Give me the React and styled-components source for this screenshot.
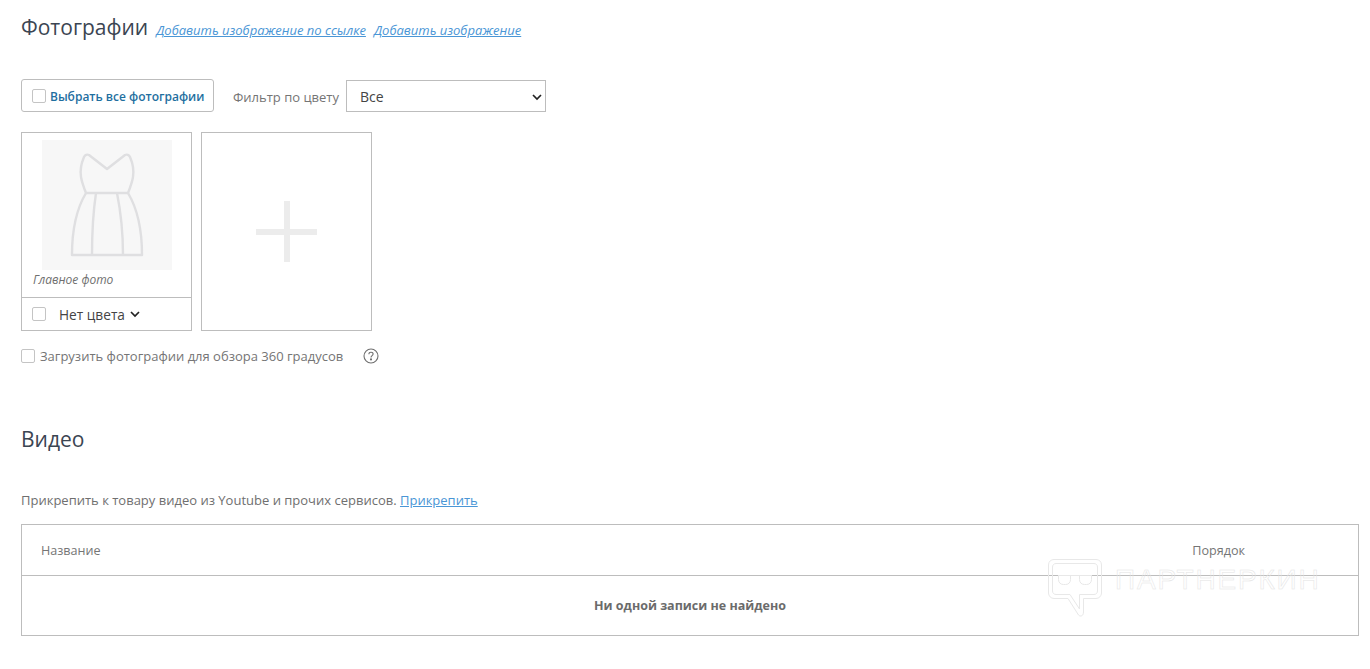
import React from "react";
import styled, { createGlobalStyle } from "styled-components";

const Global = createGlobalStyle`
  html, body { margin: 0; padding: 0; background: #fff; }
  body { font-family: "Open Sans", "Liberation Sans", sans-serif; font-size: 13px; color: #6b6b6b; }
  * { box-sizing: border-box; }
`;
const Page = styled.div`
  position: relative;
  width: 1370px;
  height: 669px;
  overflow: hidden;
  padding: 12px 11px 0 21px;
`;
const TitleRow = styled.div`
  display: flex;
  align-items: baseline;
  gap: 8px;
  height: 30px;
`;
const Heading = styled.h2`
  margin: 0;
  font-size: 21px;
  line-height: 30px;
  font-weight: 400;
  color: #3b4552;
`;
const ItalicLink = styled.a`
  font-size: 13px;
  font-style: italic;
  color: #4a96d6;
  text-decoration: underline;
  line-height: 18px;
`;
const Toolbar = styled.div`
  display: flex;
  align-items: center;
  margin-top: 37px;
  height: 33px;
`;
const SelectAll = styled.label`
  display: flex;
  align-items: center;
  gap: 4px;
  width: 193px;
  height: 33px;
  padding-left: 10px;
  border: 1px solid #bdbdbd;
  border-radius: 3px;
  font-size: 12px;
  font-weight: 600;
  color: #1f6f9f;
`;
const Check = styled.span`
  display: block;
  flex: none;
  width: 14px;
  height: 14px;
  border: 1px solid #c4c4c4;
  border-radius: 2px;
  background: #fff;
`;
const NudgedText = styled.span`
  padding-top: 2px;
`;
const FilterLabel = styled.span`
  margin-left: 19px;
  width: 113px;
  padding-top: 2px;
  font-size: 13px;
  color: #757575;
`;
const Select = styled.div`
  position: relative;
  display: flex;
  align-items: center;
  width: 200px;
  height: 32px;
  padding: 2px 0 0 13px;
  border: 1px solid #bdbdbd;
  font-size: 14px;
  color: #444;
`;
const SelectChevron = styled.svg`
  position: absolute;
  right: 3px;
  top: 11px;
`;
const Tiles = styled.div`
  display: flex;
  gap: 9px;
  margin-top: 20px;
`;
const Tile = styled.div`
  display: flex;
  flex-direction: column;
  width: 171px;
  height: 199px;
  border: 1px solid #bdbdbd;
`;
const AddTile = styled(Tile)`
  align-items: center;
  justify-content: center;
`;
const TileBody = styled.div`
  flex: 1;
  padding: 7px 0 0 20px;
`;
const Preview = styled.div`
  width: 130px;
  height: 130px;
  background: #f7f7f7;
`;
const Caption = styled.div`
  margin: 2px 0 0 -9px;
  font-size: 12px;
  line-height: 16px;
  font-style: italic;
  color: #6f6f6f;
`;
const TileFooter = styled.div`
  display: flex;
  align-items: center;
  height: 33px;
  padding-left: 10px;
  border-top: 1px solid #bdbdbd;
  font-size: 13.7px;
  color: #444;
`;
const ColorName = styled.span`
  margin-left: 13px;
  margin-right: 5px;
`;
const Option360 = styled.div`
  display: flex;
  align-items: center;
  margin-top: 16px;
  height: 18px;
  font-size: 13px;
  color: #757575;
`;
const Option360Text = styled.span`
  margin-left: 5px;
  margin-right: 20px;
`;
const VideoHeading = styled(Heading)`
  margin-top: 59px;
`;
const Help = styled.p`
  margin: 37px 0 0;
  font-size: 13px;
  line-height: 18px;
  color: #6f6f6f;
`;
const Attach = styled.a`
  color: #4a96d6;
  text-decoration: underline;
`;
const Table = styled.div`
  margin-top: 15px;
  width: 1338px;
  height: 112px;
  border: 1px solid #bdbdbd;
`;
const TableHead = styled.div`
  display: flex;
  align-items: center;
  justify-content: space-between;
  height: 51px;
  padding: 0 113px 0 19px;
  border-bottom: 1px solid #bdbdbd;
  font-size: 12.6px;
  color: #757575;
`;
const Empty = styled.div`
  display: flex;
  align-items: center;
  justify-content: center;
  height: 59px;
  font-size: 12.5px;
  font-weight: 700;
  color: #6b6b6b;
`;
const Watermark = styled.div`
  position: absolute;
  left: 1048px;
  top: 559px;
  display: flex;
  align-items: flex-start;
  pointer-events: none;
`;
const WatermarkText = styled.span`
  margin: 3px 0 0 13px;
  font-family: "Liberation Sans", sans-serif;
  font-size: 28px;
  line-height: 36px;
  letter-spacing: 1.8px;
  color: transparent;
  -webkit-text-stroke: 0.5px #e4e4e4;
`;

const Chevron = ({ size = 10 }) => (
  <svg width={size} height={size} viewBox="0 0 10 10" fill="none" stroke="#222" strokeWidth="1.7">
    <path d="M1 3l4 4 4-4" />
  </svg>
);

const Dress = () => (
  <svg width="130" height="130" viewBox="0 0 130 130" fill="none" stroke="#dfdfe1" strokeWidth="2.4" strokeLinejoin="round">
    <path d="M42 17c1-2 3-3 5-2l18 14 18-14c2-1 4 0 5 2 3 7 4 14 3 20-1 6-3 11-5 16H44c-2-5-4-10-5-16-1-6 0-13 3-20z" />
    <path d="M44 53c-9 15-14 35-14 62h70c0-27-5-47-14-62" />
    <path d="M54 53c-3 20-4 41-4 62M75 53c4 20 6 41 6 62" />
  </svg>
);

const HelpIcon = () => (
  <svg width="16" height="16" viewBox="0 0 16 16" fill="none" stroke="#6f6f6f" strokeWidth="1.1">
    <circle cx="8" cy="8" r="7" />
    <path d="M5.9 6.2c0-1.2 1-1.9 2.1-1.9s2.1.7 2.1 1.8c0 1.6-2.1 1.5-2.1 3.3" />
    <circle cx="8" cy="11.4" r=".5" fill="#6f6f6f" />
  </svg>
);

const WatermarkLogo = () => (
  <svg width="54" height="58" viewBox="0 0 54 58" fill="none" stroke="#e8e8e8" strokeWidth="1">
    <path d="M6 .5h42c3 0 5.500 2 5.500 5.500v28c0 3-2.500 5.500-5.500 5.500H35.500V53c0 4-3 5-5 3L20 39.500H6C3 39.500.5 37 .5 34V6C.5 2.500 3 .5 6 .5z" />
    <path d="M8 4.500h38c2 0 3.500 1.500 3.500 3.500v24c0 2-1.500 3.500-3.500 3.500H31.500V50L22 35.500H8c-2 0-3.500-1.500-3.500-3.500V8c0-2 1.500-3.500 3.500-3.500z" />
    <path d="M10 16.500h34M10.500 16.500v4c0 3 2 5 5 5h2c3 0 5-2 5-5v-4M31.500 16.500v4c0 3 2 5 5 5h2c3 0 5-2 5-5v-4" />
  </svg>
);

export default function App() {
  return (
    <Page>
      <Global />
      <TitleRow>
        <Heading>Фотографии</Heading>
        <ItalicLink>Добавить изображение по ссылке</ItalicLink>
        <ItalicLink>Добавить изображение</ItalicLink>
      </TitleRow>
      <Toolbar>
        <SelectAll><Check /><NudgedText>Выбрать все фотографии</NudgedText></SelectAll>
        <FilterLabel>Фильтр по цвету</FilterLabel>
        <Select>
          Все
          <SelectChevron width="10" height="10" viewBox="0 0 10 10" fill="none" stroke="#222" strokeWidth="1.7">
            <path d="M1 3l4 4 4-4" />
          </SelectChevron>
        </Select>
      </Toolbar>
      <Tiles>
        <Tile>
          <TileBody>
            <Preview><Dress /></Preview>
            <Caption>Главное фото</Caption>
          </TileBody>
          <TileFooter>
            <Check />
            <ColorName>Нет цвета</ColorName>
            <Chevron />
          </TileFooter>
        </Tile>
        <AddTile>
          <svg width="61" height="61" viewBox="0 0 61 61" fill="#ececec">
            <rect x="28" y="0" width="6" height="61" />
            <rect x="0" y="28" width="61" height="6" />
          </svg>
        </AddTile>
      </Tiles>
      <Option360>
        <Check />
        <Option360Text>Загрузить фотографии для обзора 360 градусов</Option360Text>
        <HelpIcon />
      </Option360>
      <VideoHeading>Видео</VideoHeading>
      <Help>
        Прикрепить к товару видео из Youtube и прочих сервисов. <Attach>Прикрепить</Attach>
      </Help>
      <Table>
        <TableHead>
          <span>Название</span>
          <span>Порядок</span>
        </TableHead>
        <Empty>Ни одной записи не найдено</Empty>
      </Table>
      <Watermark>
        <WatermarkLogo />
        <WatermarkText>ПАРТНЕРКИН</WatermarkText>
      </Watermark>
    </Page>
  );
}
